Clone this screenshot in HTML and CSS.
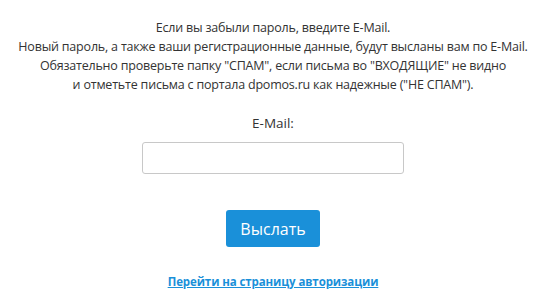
FILE: index.html
```html
<!DOCTYPE html>
<html lang="ru">
<head>
    <meta charset="UTF-8">
    <title>Восстановление пароля</title>
    <link rel="stylesheet" href="styles.css">
</head>
<body>
    <div class="forgot">
        <p class="note">
            Если вы забыли пароль, введите E-Mail.<br>
            Новый пароль, а также ваши регистрационные данные, будут высланы вам по E-Mail.<br>
            Обязательно проверьте папку "СПАМ", если письма во "ВХОДЯЩИЕ" не видно<br>
            и отметьте письма с портала dpomos.ru как надежные ("НЕ СПАМ").
        </p>
        <form class="forgot-form">
            <label for="email">E-Mail:</label>
            <input type="text" id="email" name="email">
            <button type="button" class="send-button">Выслать</button>
        </form>
        <a href="#" class="auth-link">Перейти на страницу авторизации</a>
    </div>
</body>
</html>
```

FILE: styles.css
```css
body {
    margin: 0;
    font-family: 'Open Sans', 'Noto Sans', sans-serif;
    color: #333;
    background: #fff;
}

.forgot {
    width: 546px;
    text-align: center;
    padding-top: 18px;
}

.note {
    margin: 0;
    font-size: 12.5px;
    line-height: 19px;
    letter-spacing: -0.2px;
    white-space: nowrap;
}

.forgot-form {
    display: flex;
    flex-direction: column;
    align-items: center;
    margin-top: 19px;
}

.forgot-form label {
    font-size: 13.5px;
    line-height: 20px;
}

#email {
    box-sizing: border-box;
    width: 262px;
    height: 32px;
    margin-top: 9px;
    border: 1px solid #c8c8c8;
    border-radius: 3px;
    outline: none;
}

.send-button {
    width: 94px;
    height: 37px;
    margin-top: 36px;
    background-color: #1a90d9;
    color: #fff;
    border: none;
    border-radius: 3px;
    font-family: inherit;
    font-size: 16px;
    cursor: pointer;
}

.auth-link {
    display: inline-block;
    margin-top: 27px;
    font-size: 11.5px;
    font-weight: bold;
    letter-spacing: -0.1px;
    color: #1a90d9;
}
```
